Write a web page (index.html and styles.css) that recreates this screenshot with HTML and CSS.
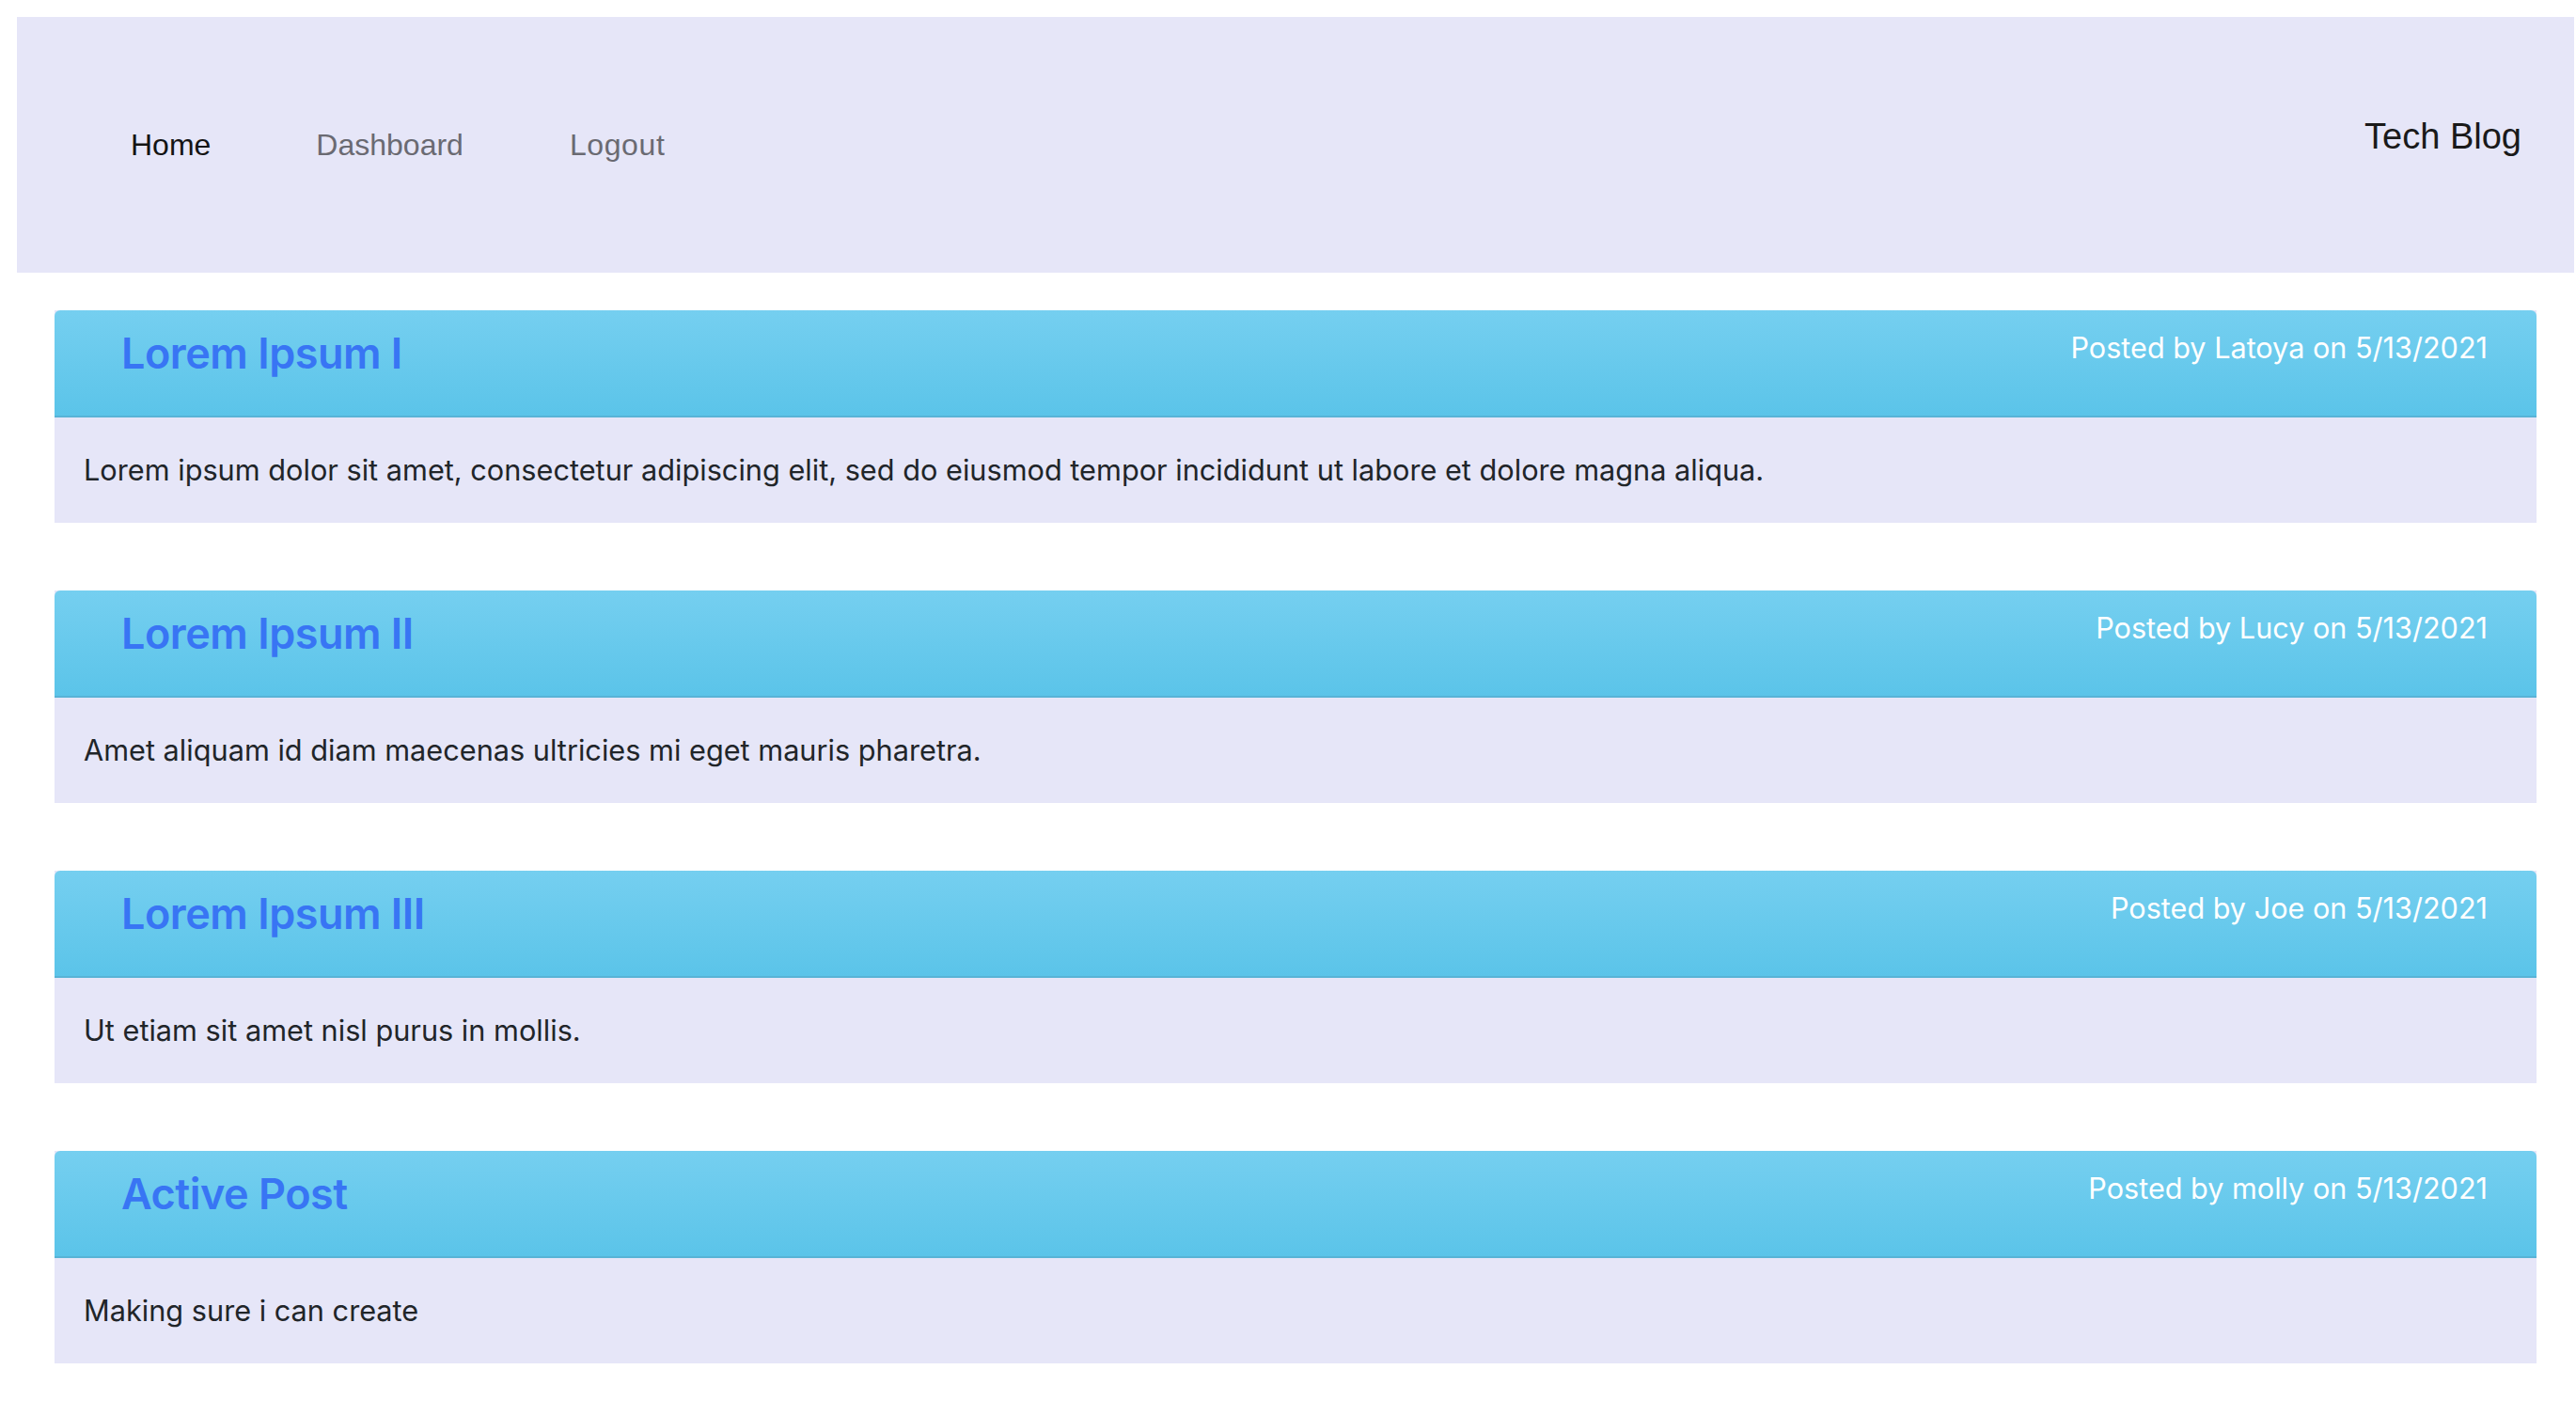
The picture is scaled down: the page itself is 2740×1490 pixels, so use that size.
FILE: index.html
```html
<!DOCTYPE html>
<html lang="en">
<head>
<meta charset="utf-8">
<title>Tech Blog</title>
<link rel="stylesheet" href="styles.css">
</head>
<body>
<nav class="navbar">
  <ul class="nav-links">
    <li><a class="nav-link active" href="#">Home</a></li>
    <li><a class="nav-link" href="#">Dashboard</a></li>
    <li><a class="nav-link nav-link-last" href="#">Logout</a></li>
  </ul>
  <div class="brand">Tech Blog</div>
</nav>
<main class="posts">
  <article class="post">
    <header class="post-header">
      <h2 class="post-title">Lorem Ipsum I</h2>
      <span class="post-meta">Posted by Latoya on 5/13/2021</span>
    </header>
    <div class="post-body"><p>Lorem ipsum dolor sit amet, consectetur adipiscing elit, sed do eiusmod tempor incididunt ut labore et dolore magna aliqua.</p></div>
  </article>
  <article class="post">
    <header class="post-header">
      <h2 class="post-title">Lorem Ipsum II</h2>
      <span class="post-meta">Posted by Lucy on 5/13/2021</span>
    </header>
    <div class="post-body"><p>Amet aliquam id diam maecenas ultricies mi eget mauris pharetra.</p></div>
  </article>
  <article class="post">
    <header class="post-header">
      <h2 class="post-title">Lorem Ipsum III</h2>
      <span class="post-meta">Posted by Joe on 5/13/2021</span>
    </header>
    <div class="post-body"><p>Ut etiam sit amet nisl purus in mollis.</p></div>
  </article>
  <article class="post">
    <header class="post-header">
      <h2 class="post-title">Active Post</h2>
      <span class="post-meta">Posted by molly on 5/13/2021</span>
    </header>
    <div class="post-body"><p>Making sure i can create</p></div>
  </article>
</main>
</body>
</html>
```
FILE: styles.css
```css
html, body {
  background: #ffffff;
}
body {
  margin: 18px 2px 0 18px;
  font-family: Inter, "Noto Sans", sans-serif;
  color: #212529;
}
.navbar {
  height: 272px;
  background: #e6e6f8;
  display: flex;
  align-items: center;
  justify-content: space-between;
}
.nav-links {
  list-style: none;
  margin: 0;
  padding: 0 0 0 65px;
  display: flex;
}
.nav-link {
  display: block;
  padding: 0 56px;
  font-family: "Liberation Sans", Arial, sans-serif;
  font-size: 32px;
  line-height: 40px;
  color: #6a6a72;
  text-decoration: none;
}
.nav-link-last {
  padding-left: 57px;
  letter-spacing: 0.6px;
}
.nav-link.active {
  color: #141414;
}
.brand {
  font-family: "Liberation Sans", Arial, sans-serif;
  font-size: 38px;
  line-height: 46px;
  color: #1a1a1a;
  padding-right: 56px;
  margin-bottom: 18px;
}
.posts {
  padding: 40px 40px 40px;
  display: flex;
  flex-direction: column;
  gap: 72px;
}
.post {
  background: #e6e6f8;
}
.post-header {
  height: 112px;
  border-bottom: 2px solid #58b3d6;
  border-radius: 6px 6px 0 0;
  background: linear-gradient(#75cff0, #5bc4e9);
  display: flex;
  justify-content: space-between;
  align-items: flex-start;
  padding: 0 52px 0 71px;
}
.post-title {
  margin: 19px 0 0;
  font-size: 45px;
  line-height: 54px;
  font-weight: 600;
  color: #3875f4;
  letter-spacing: -0.5px;
}
.post-meta {
  margin-top: 22px;
  font-size: 30.6px;
  line-height: 36px;
  color: #ffffff;
}
.post-body {
  height: 112px;
  display: flex;
  align-items: center;
  padding: 0 31px;
}
.post-body p {
  margin: 0;
  font-size: 30.7px;
  line-height: 36px;
  color: #212529;
}
```
